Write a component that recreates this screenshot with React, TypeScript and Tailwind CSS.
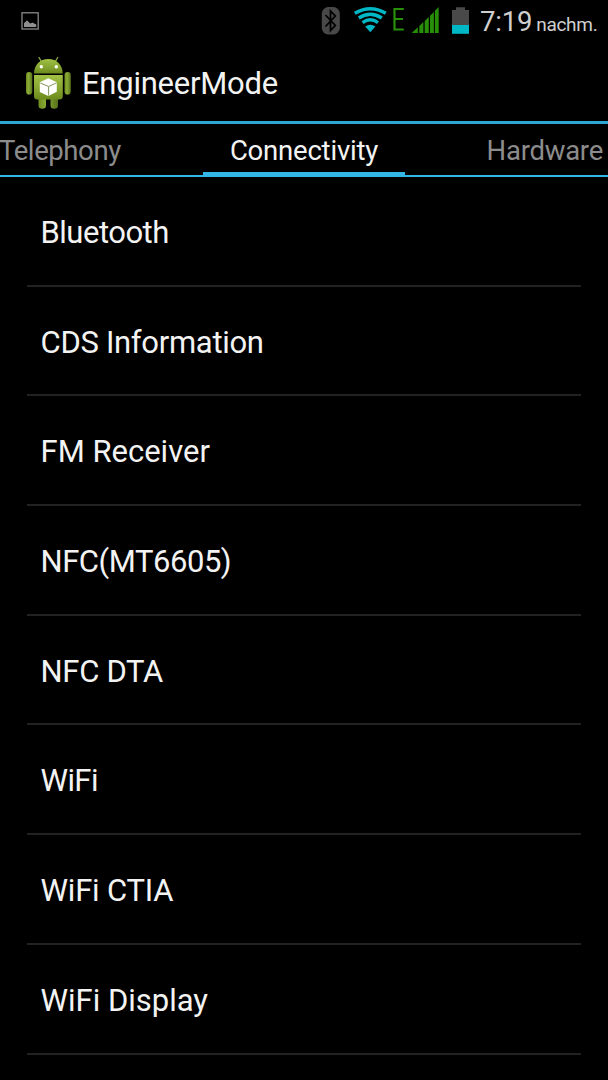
import type { ReactNode } from "react";

const items = [
  { label: "Bluetooth", spacing: "tracking-[-0.5px]" },
  { label: "CDS Information", spacing: "tracking-[-0.3px]" },
  { label: "FM Receiver", spacing: "tracking-[0px]" },
  { label: "NFC(MT6605)", spacing: "tracking-[-0.45px]" },
  { label: "NFC DTA", spacing: "tracking-[-0.3px]" },
  { label: "WiFi", spacing: "tracking-[-0.6px]" },
  { label: "WiFi CTIA", spacing: "tracking-[-0.2px]" },
  { label: "WiFi Display", spacing: "tracking-[0px]" },
];

function PictureIcon() {
  return (
    <svg className="ml-[21px] h-[44px] w-5" viewBox="21 0 20 44" fill="none">
      <rect x="22" y="12.800" width="16.200" height="16.200" stroke="#8a8a8a" strokeWidth="1.300" />
      <path d="M24 27v-4l1.500-1 .8-1.200h1.400L29 22.500l1.500 1 1.500-.7h1.400l1 1 1.800.4V27z" fill="#8f8f8f" />
    </svg>
  );
}

function StatusIcons() {
  return (
    <svg className="h-[44px] w-[160px]" viewBox="320 0 160 44" fill="none">
      <rect x="321.800" y="7" width="18" height="27.500" rx="6.500" fill="#484848" />
      <path d="M325.500 15l9.800 10.500-4.800 5V11l4.800 5-9.800 10.500" stroke="#000" strokeWidth="1.800" />

      <g stroke="#00b7c5" strokeWidth="3.400">
        <path d="M354.800 13.300Q370.300 4.300 385.800 13.300" />
        <path d="M358.800 18Q370.300 10.300 381.800 18" />
        <path d="M362.600 22.700Q370.300 17 378 22.700" />
      </g>
      <path d="M365.200 26.500Q370.300 22.800 375.400 26.500L370.300 32.300z" fill="#00b7c5" />

      <path d="M403.800 9H394.500V29.500H403.800M394.500 19H403" stroke="#278f08" strokeWidth="2.200" />
      <g fill="#278f08">
        <path d="M411.800 33l6-5.800V33z" />
        <path d="M419.300 25.900l4.100-3.900V33h-4.100z" />
        <path d="M424.700 20.900l4.100-4v16.100h-4.100z" />
        <path d="M430 15.700l3.900-3.700v21H430z" />
        <path d="M434.900 10.800l3.800-3.800v26h-3.800z" />
      </g>

      <path d="M452 10h4V7.300h9V10h4v16h-17z" fill="#494949" />
      <path d="M452 25h17v8.800h-17z" fill="#00b7c5" />
    </svg>
  );
}

function AndroidIcon() {
  return (
    <svg className="ml-6 h-[58px] w-[50px]" viewBox="24 54 50 58" fill="none">
      <defs>
        <linearGradient id="green" x1="0" y1="0" x2="0" y2="1">
          <stop offset="0" stopColor="#a0c244" />
          <stop offset=".55" stopColor="#86a530" />
          <stop offset="1" stopColor="#6c8a1c" />
        </linearGradient>
        <linearGradient id="limb" x1="0" y1="0" x2="1" y2="0">
          <stop offset="0" stopColor="#6e8c20" />
          <stop offset=".4" stopColor="#8cac35" />
          <stop offset="1" stopColor="#54701a" />
        </linearGradient>
      </defs>
      <path d="M39 57.500l3 5M57.700 57.500l-3 5" stroke="#91ad43" strokeWidth="1.300" strokeLinecap="round" />
      <path d="M38.500 97h7.500v8.500q0 3.300-3.700 3.300t-3.800-3.300zM50.500 97H58v8.500q0 3.300-3.700 3.300t-3.800-3.300z" fill="url(#limb)" />
      <rect x="26" y="72" width="6.300" height="22.500" rx="3.100" fill="url(#limb)" />
      <rect x="64.500" y="72" width="6.300" height="22.500" rx="3.100" fill="url(#limb)" />
      <path d="M34 73.500C34 65 40 59 48.300 59S62.700 65 62.700 73.500z" fill="url(#green)" />
      <path d="M34 75h28.800v21q0 3.500-3.500 3.500H37.500Q34 99.500 34 96z" fill="url(#green)" />
      <circle cx="41.300" cy="66.800" r="1.700" fill="#fff" />
      <circle cx="56.300" cy="66.800" r="1.700" fill="#fff" />
      <path d="M48.300 78.200l8.500 4v9.500L48.300 96l-8.500-4v-9.800z" fill="#fff" />
      <path d="M40.300 83l8.300 3.500 8-3.700M48.600 86.500V95.500" stroke="#83945c" strokeWidth="1" />
    </svg>
  );
}

function Tab({ className, children }: { className: string; children: ReactNode }) {
  return <div className={`h-full shrink-0 pt-[11px] text-[27.5px] leading-8 ${className}`}>{children}</div>;
}

export default function App() {
  return (
    <div className="h-[1080px] w-[608px] overflow-hidden bg-black font-[Roboto,sans-serif] text-[#f3f3f3]">
      <header className="flex h-[44px] justify-between">
        <PictureIcon />
        <div className="flex">
          <StatusIcons />
          <div className="flex w-32 items-baseline whitespace-nowrap pt-1.5 text-[#cfcfcf]">
            <span className="text-[27.5px] leading-8 tracking-[-0.2px]">7:19</span>
            <span className="ml-1 text-[19px] tracking-[-0.3px]">nachm.</span>
          </div>
        </div>
      </header>

      <div className="flex h-[77px] pt-[10px]">
        <AndroidIcon />
        <h1 className="ml-2 pt-2.5 text-[31px] leading-10 tracking-[-0.25px]">EngineerMode</h1>
      </div>

      <nav className="h-14 border-t-[3px] border-[#2ea6d3]">
        <div className="flex h-full justify-between border-b-2 border-[#33b5e5]">
          <Tab className="w-[203px] tracking-[-0.4px] text-[#8c8c8c]">
            <span className="-ml-px">Telephony</span>
          </Tab>
          <Tab className="w-[202px] border-b-[3px] border-[#33b5e5] text-center tracking-[-0.2px]">Connectivity</Tab>
          <Tab className="w-[203px] pr-[5px] text-right tracking-[-0.25px] text-[#8c8c8c]">Hardware</Tab>
        </div>
      </nav>

      <ul className="px-[27px]">
        {items.map(({ label, spacing }) => (
          <li
            key={label}
            className={`flex h-[109.7px] items-center border-b-2 border-[#222222] pt-1 pl-[13.5px] text-[31px] leading-9 ${spacing}`}
          >
            {label}
          </li>
        ))}
      </ul>
    </div>
  );
}
